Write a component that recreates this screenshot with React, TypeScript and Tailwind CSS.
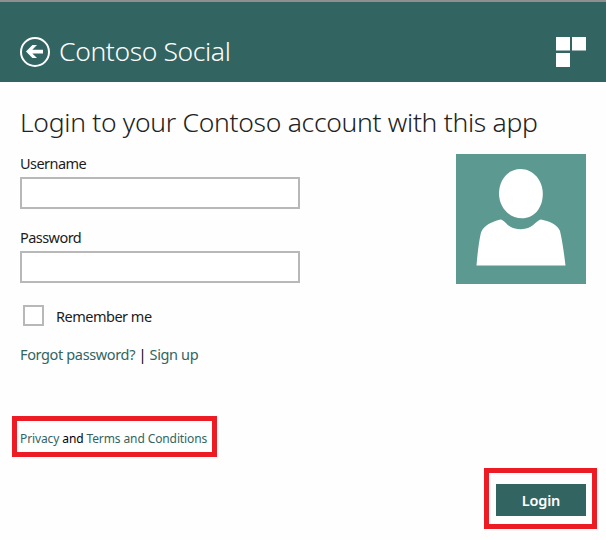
import React from "react";

function Header() {
  return (
    <header className="flex h-[82px] items-start justify-between border-t-2 border-[#8f8f8f] bg-[#326562] pl-5 pr-5 text-white">
      <div className="flex pt-[34px]">
        <button type="button" aria-label="Back" className="mt-px h-[30px] w-[30px]">
          <svg viewBox="0 0 30 30" className="block h-[30px] w-[30px]">
            <circle cx="15" cy="15" r="14" fill="none" stroke="currentColor" strokeWidth="2" />
            <path d="M6 14.500 12.400 8H17l-4.700 4.700H23v3.800H12.300L17 21h-4.600z" fill="currentColor" />
          </svg>
        </button>
        <h1 className="ml-[9px] h-7 whitespace-nowrap text-[26.5px] font-light leading-[31px] tracking-[-0.38px]">Contoso Social</h1>
      </div>
      <div className="mt-[35px] grid grid-cols-[14px_14px] gap-0.5">
        <span className="h-3.5 border-b border-[#9ab2b1] bg-white" />
        <span className="h-3.5 border-b border-[#9ab2b1] bg-white" />
        <span className="h-3.5 bg-white" />
      </div>
    </header>
  );
}

function Field({ label, type }: { label: string; type: string }) {
  return (
    <label className="block h-[74px] w-[280px]">
      <span className="block h-6 text-[14.5px] leading-[20px] tracking-[-0.55px] text-[#1c1c1c]">{label}</span>
      <input type={type} className="block h-8 w-[280px] border-2 border-[#b8b8b8] bg-white px-2 outline-none" />
    </label>
  );
}

function Avatar() {
  return (
    <svg viewBox="0 0 130 130" className="block h-[130px] w-[130px] bg-[#5c9990]" fill="white">
      <path d="M64.500 15C77 15 86.800 26 86.800 40S78 64.300 66 64.300C53 64.300 43 53 43 39.500S52 15 64.500 15z" />
      <path d="M20.500 111.500C21.500 99 23 87 25 78.500C28 70.500 37 67.500 44.500 65.500C48 66 50 70 54 72.500C60 76 69 76 75 72.500C79 70 82 66 85 65.500C93 67 101 70 104 77C106.500 88 108 99 109.500 111.500z" />
    </svg>
  );
}

export default function App() {
  return (
    <div className="flex h-[540px] w-[606px] flex-col overflow-hidden bg-[#fefefe] font-['Noto_Sans','Open_Sans',sans-serif] text-black">
      <Header />
      <main className="flex flex-1 flex-col">
        <h2 className="mt-[22px] h-9 whitespace-nowrap pl-5 text-[26.5px] font-light leading-[37px] tracking-[-0.3px] text-[#222]">
          Login to your Contoso account with this app
        </h2>
        <div className="mt-[13px] flex h-[148px] justify-between px-5">
          <div>
            <Field label="Username" type="text" />
            <Field label="Password" type="password" />
          </div>
          <div className="mt-px">
            <Avatar />
          </div>
        </div>
        <label className="ml-[23px] mt-1 flex h-[21px] items-center">
          <input type="checkbox" className="h-[21px] w-[21px] appearance-none border-2 border-[#b8b8b8] bg-white" />
          <span className="ml-3 text-[14.5px] leading-5 tracking-[-0.5px] text-[#1c1c1c]">Remember me</span>
        </label>
        <p className="ml-5 mt-[18px] h-5 whitespace-nowrap text-[14.5px] leading-5 tracking-[-0.36px]">
          <a className="text-[#326562]">Forgot password?</a> | <a className="text-[#326562]">Sign up</a>
        </p>
        <div className="ml-3 mt-[52px] flex h-[41px] w-[205px] items-center whitespace-nowrap border-[5px] border-[#ed1c24] pl-[3px] pt-[5px] text-xs tracking-[-0.11px]">
          <p className="leading-5">
            <a className="text-[#326562]">Privacy</a> and <a className="text-[#326562]">Terms and Conditions</a>
          </p>
        </div>
        <div className="ml-[484px] mt-[11px] flex h-[61px] w-[113px] border-[5px] border-[#ed1c24] pl-[7px] pt-[11px]">
          <button type="button" className="h-8 w-[90px] bg-[#326562] text-[14.5px] font-semibold leading-8 tracking-[-0.2px] text-white">Login</button>
        </div>
      </main>
    </div>
  );
}
